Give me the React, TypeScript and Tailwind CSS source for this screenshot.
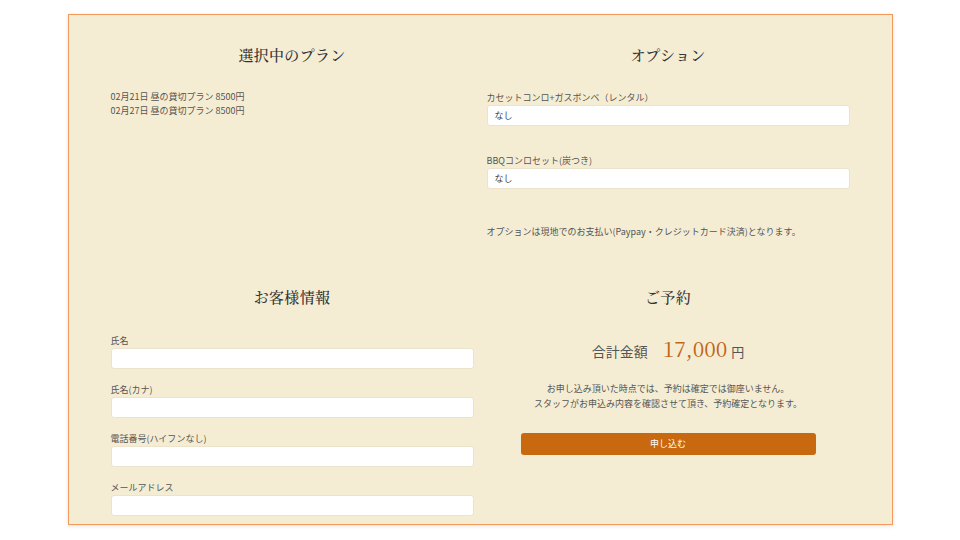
import React from "react"

const sans = { fontFamily: '"Noto Sans CJK JP", "Liberation Sans", sans-serif' }
const serif = { fontFamily: '"Noto Serif CJK JP", "Liberation Serif", "Noto Sans CJK JP", serif' }

function Heading({ children }: { children: React.ReactNode }) {
  return (
    <h2 style={serif} className="text-center text-[15px] leading-5 tracking-[0.3px] text-[#333] font-medium">
      {children}
    </h2>
  )
}

function Field({ label, value, gap }: { label: string; value?: string; gap?: string }) {
  return (
    <div className={gap}>
      <label className="block text-[9px] leading-[14px] text-[#555]">{label}</label>
      <div className="h-[21px] bg-white rounded-[3px] border border-[#ebe3cc] px-[7px] flex items-center text-[9px] text-[#444]">
        {value}
      </div>
    </div>
  )
}

export default function App() {
  const plans = ["02月21日 昼の貸切プラン 8500円", "02月27日 昼の貸切プラン 8500円"]

  return (
    <div style={sans} className="min-h-screen bg-white pt-[14px]">
      <div className="mx-auto w-[825px] h-[511px] bg-[#f5edd3] border border-[#f39a5a] shadow-[0_1px_4px_rgba(0,0,0,0.12)] px-[42px] pt-[30px]">
        {/* row 1 */}
        <div className="grid grid-cols-2 gap-x-[13px] items-start">
          <section>
            <Heading>選択中のプラン</Heading>
            <div className="mt-[25px] text-[9px] leading-[14px] text-[#555]">
              {plans.map((p, i) => (
                <p key={i}>{p}</p>
              ))}
            </div>
          </section>
          <section>
            <Heading>オプション</Heading>
            <div className="mt-[26px]">
              <Field label="カセットコンロ+ガスボンベ（レンタル）" value="なし" />
              <Field label="BBQコンロセット(炭つき)" value="なし" gap="mt-[28px]" />
              <p className="mt-[36px] text-[9px] leading-[14px] text-[#555]">
                オプションは現地でのお支払い(Paypay・クレジットカード決済)となります。
              </p>
            </div>
          </section>
        </div>

        {/* row 2 */}
        <div className="grid grid-cols-2 gap-x-[13px] items-start mt-[48px]">
          <section>
            <Heading>お客様情報</Heading>
            <div className="mt-[27px]">
              <Field label="氏名" />
              <Field label="氏名(カナ)" gap="mt-[14px]" />
              <Field label="電話番号(ハイフンなし)" gap="mt-[14px]" />
              <Field label="メールアドレス" gap="mt-[14px]" />
            </div>
          </section>
          <section>
            <Heading>ご予約</Heading>
            <div className="mt-[26px] flex items-baseline justify-center text-[#555] h-[30px] leading-[30px]">
              <span className="text-[14px]">合計金額</span>
              <span style={serif} className="ml-[15px] text-[21px] text-[#c0651a]">17,000</span>
              <span className="ml-[4px] text-[13px]">円</span>
            </div>
            <div className="mt-[18px] text-center text-[9px] leading-[15px] text-[#555]">
              <p>お申し込み頂いた時点では、予約は確定では御座いません。</p>
              <p>スタッフがお申込み内容を確認させて頂き、予約確定となります。</p>
            </div>
            <button className="mt-[22px] mx-auto block w-[295px] h-[22px] rounded-[3px] bg-[#c8680f] text-white text-[9px]">
              申し込む
            </button>
          </section>
        </div>
      </div>
    </div>
  )
}
